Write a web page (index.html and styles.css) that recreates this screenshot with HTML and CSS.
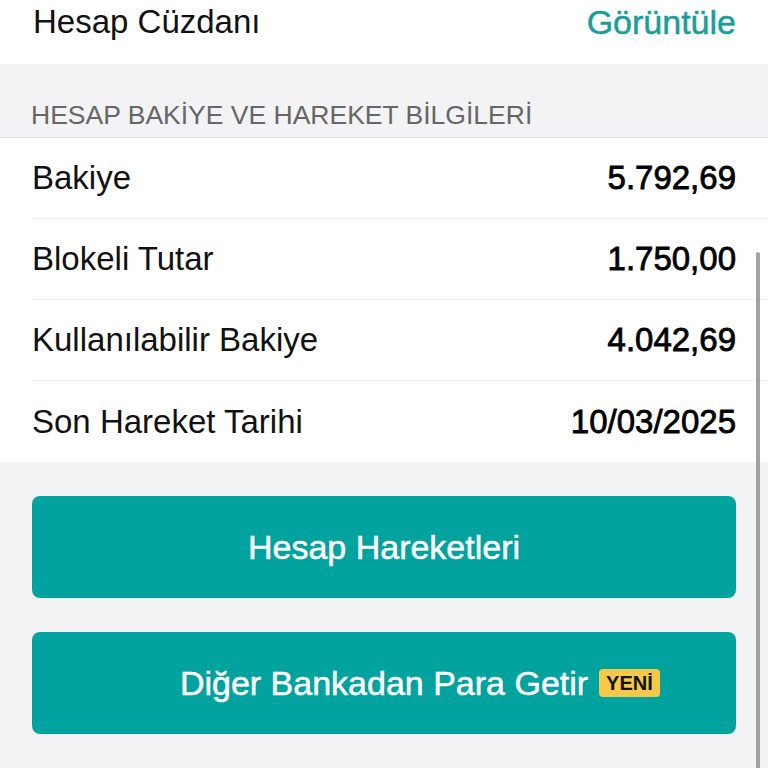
FILE: index.html
```html
<!DOCTYPE html>
<html lang="tr">
<head>
<meta charset="utf-8">
<link rel="stylesheet" href="styles.css">
</head>
<body>
<div class="page">
  <div class="wallet-row">
    <span class="wallet-title">Hesap Cüzdanı</span>
    <span class="wallet-link">Görüntüle</span>
  </div>
  <div class="section-head">HESAP BAKİYE VE HAREKET BİLGİLERİ</div>
  <div class="list">
    <div class="row"><span class="label">Bakiye</span><span class="value">5.792,69</span></div>
    <div class="row"><span class="label">Blokeli Tutar</span><span class="value">1.750,00</span></div>
    <div class="row"><span class="label">Kullanılabilir Bakiye</span><span class="value">4.042,69</span></div>
    <div class="row last"><span class="label">Son Hareket Tarihi</span><span class="value">10/03/2025</span></div>
  </div>
  <div class="actions">
    <div class="btn"><span class="btn-text">Hesap Hareketleri</span></div>
    <div class="btn"><span class="btn-text">Diğer Bankadan Para Getir<span class="badge">YENİ</span></span></div>
  </div>
  <div class="scrollbar"></div>
</div>
</body>
</html>
```
FILE: styles.css
```css
html, body {
  margin: 0;
  padding: 0;
  background: #f3f3f5;
}
.page {
  position: relative;
  width: 768px;
  height: 768px;
  overflow: hidden;
  font-family: "Liberation Sans", Arial, sans-serif;
  background: #f3f3f5;
}
.wallet-row {
  background: #fff;
  height: 64px;
  box-sizing: border-box;
  padding: 0 32px 20px 33px;
  display: flex;
  justify-content: space-between;
  align-items: center;
}
.wallet-title {
  font-size: 33px;
  line-height: 44px;
  color: #111;
}
.wallet-link {
  font-size: 34px;
  line-height: 44px;
  color: #1a9e98;
  -webkit-text-stroke: 0.5px #1a9e98;
}
.section-head {
  box-sizing: border-box;
  height: 74px;
  padding: 33px 0 0 31px;
  font-size: 26.5px;
  line-height: 36px;
  color: #666;
  border-bottom: 1px solid #e4e4e6;
}
.list {
  background: #fff;
  padding-left: 32px;
}
.row {
  height: 81px;
  box-sizing: border-box;
  display: flex;
  justify-content: space-between;
  align-items: center;
  padding-right: 32px;
  border-bottom: 1px solid #efeff1;
}
.row.last {
  border-bottom: none;
}
.label {
  font-size: 33px;
  color: #111;
}
.value {
  font-size: 33px;
  color: #000;
  -webkit-text-stroke: 0.8px #000;
}
.actions {
  padding: 34px 32px 0;
  display: flex;
  flex-direction: column;
  gap: 34px;
}
.btn {
  height: 102px;
  border-radius: 8px;
  background: #02a29e;
  display: flex;
  align-items: center;
  justify-content: center;
}
.btn-text {
  position: relative;
  font-size: 34px;
  color: #fff;
  -webkit-text-stroke: 0.5px #fff;
}
.badge {
  position: absolute;
  left: calc(100% + 11px);
  top: 50%;
  transform: translateY(-50%);
  background: #f7c94a;
  color: #111;
  font-size: 20px;
  font-weight: 700;
  line-height: 28px;
  padding: 0 7px;
  border-radius: 4px;
  -webkit-text-stroke: 0;
}
.scrollbar {
  position: absolute;
  left: 756px;
  top: 252px;
  width: 4px;
  height: 530px;
  border-radius: 2px;
  background: #a3a3a5;
}
```
